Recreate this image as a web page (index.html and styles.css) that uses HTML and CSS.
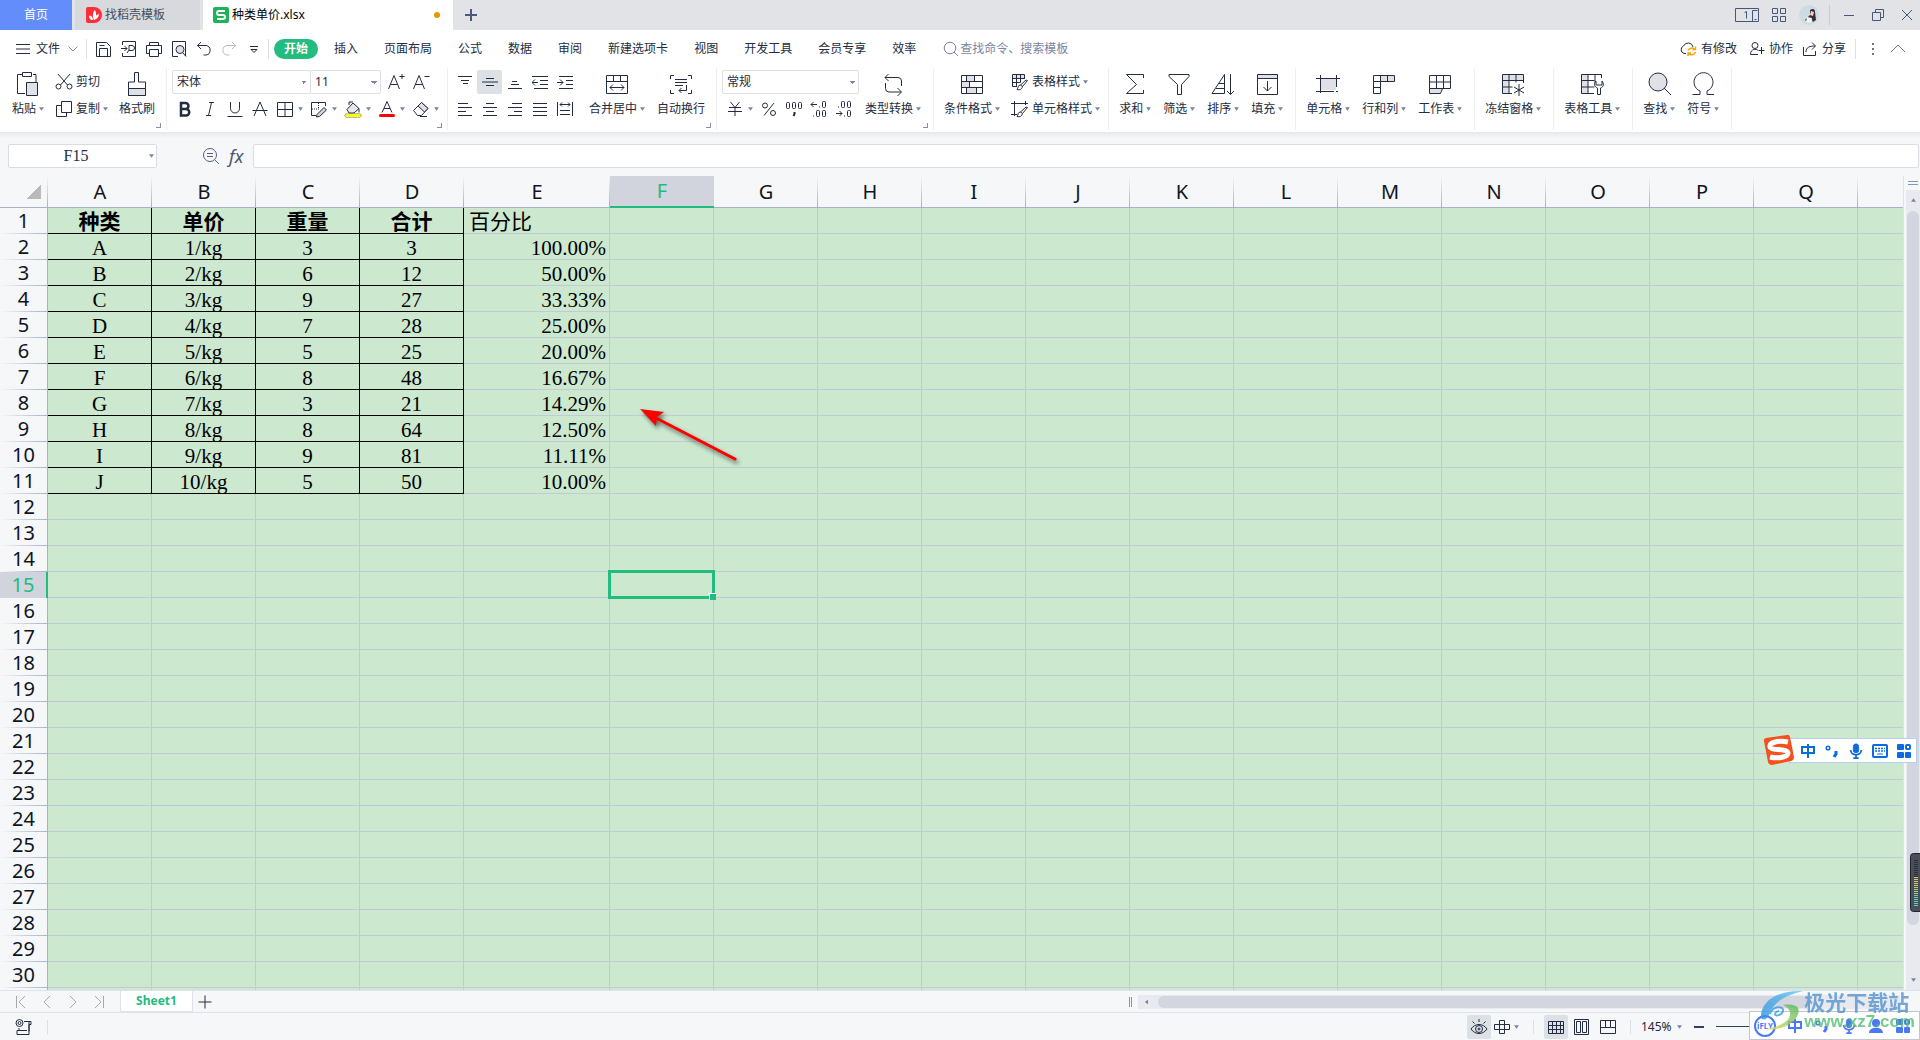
FILE: index.html
```html
<!DOCTYPE html>
<html lang="zh-CN">
<head>
<meta charset="utf-8">
<title>种类单价.xlsx</title>
<link rel="stylesheet" href="styles.css">
</head>
<body>
<svg class="sprite" aria-hidden="true">
  <symbol id="caret" viewBox="0 0 6 4"><path d="M0 0h6L3 4z" fill="#7885a3" stroke="none"/></symbol>
  <symbol id="chev" viewBox="0 0 10 6"><path d="M.5.5L5 5 9.500.5"/></symbol>
  <symbol id="menu" viewBox="0 0 16 16"><path d="M1 3.500h14M1 8h14M1 12.500h14"/></symbol>
  <symbol id="save" viewBox="0 0 16 16"><path d="M.5 1.500h10l4 4v10H.5zM3.500 15.500v-8h8v8M3.500 4.500h5"/></symbol>
  <symbol id="export" viewBox="0 0 16 16"><path d="M1.500 4V.5h13v15h-13V12M0 7.500h6M3.500 5L6 7.500 3.500 10M6 12l2-3V4.500h3a2 2 0 010 5H8"/></symbol>
  <symbol id="print" viewBox="0 0 16 16"><path d="M3.500 4.500v-3h9v3M3.500 12.500h-3v-8h15v8h-3M3.500 8.500h9v7h-9z"/></symbol>
  <symbol id="preview" viewBox="0 0 16 16"><path d="M7 15.500H1.500V.5h13V15M12 12l3 3.500"/><circle cx="9" cy="8.500" r="4" fill="#dfe1e6"/></symbol>
  <symbol id="undo" viewBox="0 0 16 16"><path d="M5 1L1.500 4.500 5 8M1.500 4.500H10a4.800 4.800 0 010 9.500H7.500"/></symbol>
  <symbol id="redo" viewBox="0 0 16 16"><path d="M11 1l3.500 3.500L11 8M14.500 4.500H6a4.800 4.800 0 000 9.500h2.500"/></symbol>
  <symbol id="search" viewBox="0 0 16 16"><circle cx="7" cy="7" r="5.800"/><path d="M11 11l4 4"/></symbol>
  <symbol id="cloud" viewBox="0 0 18 16"><path d="M7 12.500H5A4 4 0 014.500 5 5 5 0 0114 6"/><path d="M9 9.500a4 3.500 0 017-1M16.500 5.500v3h-3M16.500 11a4 3.500 0 01-7 1.500M9 15v-3h3" stroke="#f7a500" stroke-width="1.500"/></symbol>
  <symbol id="user" viewBox="0 0 16 16"><circle cx="6" cy="4.500" r="3"/><path d="M9 13.500H1.500c0-6 6-6 7.500-4M12.500 6v7M9.500 9.500h6"/></symbol>
  <symbol id="share" viewBox="0 0 16 16"><path d="M1.500 6v8.500h12V10M4 11c0-5 4-6 9-6M10 1.500L13.500 5 10 8.500"/></symbol>
  <symbol id="paste" viewBox="0 0 24 26"><path d="M9 22.500H1.500v-19h5M17 3.500h3V11M6.500 1.500h9v4h-9z"/><path d="M10.500 11.500h11v13h-11z" fill="#dfe1e6"/></symbol>
  <symbol id="cut" viewBox="0 0 18 18"><path d="M3 1l9.500 11M15 1L5.500 12"/><circle cx="3.500" cy="13.500" r="2.500"/><circle cx="14.500" cy="13.500" r="2.500"/></symbol>
  <symbol id="copy" viewBox="0 0 18 18"><path d="M6.500 1.500h10v11h-10zM6.500 5.500h-5v11h10v-4"/></symbol>
  <symbol id="painter" viewBox="0 0 24 26"><path d="M9.500 11V1.500h4V11h7v13.500h-17V11z"/><path d="M3.500 17.500h17v7h-17z" fill="#dfe1e6"/></symbol>
  <symbol id="bigger" viewBox="0 0 18 18"><path d="M1.500 16L7 2.500 12.500 16M3.500 11.500h7M15 1v5M12.500 3.500h5"/></symbol>
  <symbol id="smaller" viewBox="0 0 18 18"><path d="M1.500 16L7 2.500 12.500 16M3.500 11.500h7M12.500 3.500h5"/></symbol>
  <symbol id="bold" viewBox="0 0 18 18"><path d="M5 3h4.500a3 3 0 010 6H5zM5 9h5a3 3 0 010 6.500H5z" stroke-width="2.500"/></symbol>
  <symbol id="italic" viewBox="0 0 18 18"><path d="M8 2.500h5M5 15.500h5M10.500 2.500l-3 13"/></symbol>
  <symbol id="underline" viewBox="0 0 18 18"><path d="M4.500 2v6.500a4.500 4.500 0 009 0V2M1.500 16.500h15"/></symbol>
  <symbol id="strike" viewBox="0 0 18 18"><path d="M3 16L9 2l6 14M1.500 10.500h15"/></symbol>
  <symbol id="borders" viewBox="0 0 18 18"><path d="M1.500 2.500h15v14h-15zM9 2.500v14M1.500 9.500h15"/></symbol>
  <symbol id="drawborder" viewBox="0 0 18 18"><path d="M6 15.500H1.500v-13h14V6"/><path d="M2 9h7M8.500 3v6" stroke-dasharray="1 1"/><path d="M7 14.500l7-7 2.500 2.500-7 6.500-3 .5z" fill="#cfd2d9"/></symbol>
  <symbol id="fill" viewBox="0 0 18 18"><path d="M3 9.500L9 3l6 5.500-5 4.500H5zM5 5V2h4M15 8.500v4" fill="#e6e8ec"/><path d="M2.500 15.500h13" stroke="#77775a" stroke-width="4" stroke-linecap="round"/><path d="M2.500 15.500h13" stroke="#ff0" stroke-width="3" stroke-linecap="round"/></symbol>
  <symbol id="fontcolor" viewBox="0 0 18 18"><path d="M4 12.500L9 1.500l5 11M6 8.500h6"/><path d="M2.500 15.500h13" stroke="#f00" stroke-width="3" stroke-linecap="round"/></symbol>
  <symbol id="eraser" viewBox="0 0 18 18"><path d="M1.500 10.500l8-8 6.500 6-6.500 7h-4zM8 16.500h7"/><path d="M6 6l6.500 6 3.500-3.500-6.500-6z" fill="#dfe1e6"/></symbol>
  <symbol id="top" viewBox="0 0 16 16"><path d="M1 2.500h14M4 6.500h8M6 9.500h5"/></symbol>
  <symbol id="middle" viewBox="0 0 16 16"><path d="M4 4.500h8M0 8h16M4 11.500h8"/></symbol>
  <symbol id="bottom" viewBox="0 0 16 16"><path d="M5 7.500h5M4 10.500h8M1 14.500h14"/></symbol>
  <symbol id="outdent" viewBox="0 0 16 16"><path d="M0 2.500h16M8 6.500h8M8 10.500h8M2 14.500h14M0 8.500h6M3 5.500l-3 3 3 3"/></symbol>
  <symbol id="indent" viewBox="0 0 16 16"><path d="M2 2.500h14M9 6.500h7M9 10.500h7M2 14.500h14M0 8.500h6M3 5.500l3 3-3 3"/></symbol>
  <symbol id="left" viewBox="0 0 16 16"><path d="M1 2.500h10M1 6.500h14M1 10.500h8M1 14.500h14"/></symbol>
  <symbol id="center" viewBox="0 0 16 16"><path d="M4 2.500h8M1 6.500h14M4 10.500h8M1 14.500h14"/></symbol>
  <symbol id="right" viewBox="0 0 16 16"><path d="M5 2.500h10M1 6.500h14M7 10.500h8M1 14.500h14"/></symbol>
  <symbol id="justify" viewBox="0 0 16 16"><path d="M1 2.500h14M1 6.500h14M1 10.500h14M1 14.500h14"/></symbol>
  <symbol id="distribute" viewBox="0 0 16 16"><path d="M.5 1v14M15.500 1v14M3 3.500h10M5 1.500l-2 2 2 2M11 1.500l2 2-2 2M3 9.500h10M3 13.500h10"/></symbol>
  <symbol id="merge" viewBox="0 0 24 26"><path d="M1.500 4.500h21v18h-21zM1.500 10.500h21M8.500 4.500v6M15.500 4.500v6M5 16.500h14M8 13.500l-3 3 3 3M16 13.500l3 3-3 3"/></symbol>
  <symbol id="wrap" viewBox="0 0 24 26"><path d="M5 4.500H1.500V8M19 4.500h3.500V8M5 22.500H1.500V19M19 22.500h3.500V19M6 8.500h12M6 11.500h12M6 14.500h8M17.500 14v5.500H10M12.500 17L10 19.500l2.500 2.500"/></symbol>
  <symbol id="yen" viewBox="0 0 18 18"><path d="M4.500 2L9 7.500 13.500 2M3 7.500h12M2 11.500h14M9 7.500V16"/></symbol>
  <symbol id="percent" viewBox="0 0 18 18"><circle cx="5" cy="5.500" r="2.500"/><circle cx="13" cy="13" r="2.500"/><path d="M14 3L4 15.500"/></symbol>
  <symbol id="thousand" viewBox="0 0 18 18"><rect x="1.500" y="2.500" width="3" height="6" rx="1"/><rect x="7.500" y="2.500" width="3" height="6" rx="1"/><rect x="13.500" y="2.500" width="3" height="6" rx="1"/><path d="M9.500 12v2l-1 2" stroke-width="2"/></symbol>
  <symbol id="decplus" viewBox="0 0 18 18"><path d="M1 4.500h6M3.500 2L1 4.500 3.500 7M9.500 6.500v1M3.500 15.500v1"/><rect x="12.500" y="1.500" width="3" height="6" rx="1"/><rect x="6.500" y="10.500" width="3" height="6" rx="1"/><rect x="12.500" y="10.500" width="3" height="6" rx="1"/></symbol>
  <symbol id="decminus" viewBox="0 0 18 18"><path d="M1 13.500h6M4.500 11L7 13.500 4.500 16M9.500 15.500v1M3.500 6.500v1"/><rect x="12.500" y="10.500" width="3" height="6" rx="1"/><rect x="6.500" y="1.500" width="3" height="6" rx="1"/><rect x="12.500" y="1.500" width="3" height="6" rx="1"/></symbol>
  <symbol id="convert" viewBox="0 0 24 26"><path d="M7.500 3L4 6.500 7.500 10M4 6.500h13a3.500 3.500 0 013.500 3.500v5M16.500 17l4 4-4 4M20 21H8a3.500 3.500 0 01-3.500-3.500V12"/></symbol>
  <symbol id="cond" viewBox="0 0 24 26"><path d="M6 5h8v5H6zM2 11h7v5H2zM6 17h10v5H6z" fill="#dfe1e6" stroke="none"/><path d="M1.500 4.500h21v18h-21zM1.500 10.500h21M1.500 16.500h21M6.500 4.500v6M14.500 4.500v6M9.500 10.500v6M6.500 16.500v6M16.500 16.500v6"/></symbol>
  <symbol id="tstyle" viewBox="0 0 18 18"><path d="M2 2h12v4H2z" fill="#dfe1e6" stroke="none"/><path d="M6 13.500H1.500v-12h12V6M1.500 5.500h12M1.500 9.500h8M5.500 1.500v12M9.500 1.500v8M16.500 7.500l-5 6-2-1.500 5.500-5zM9.500 12c-3 0-2 3-3.500 4.500 3 1 5-.5 5.500-3"/></symbol>
  <symbol id="cstyle" viewBox="0 0 18 18"><path d="M0 3.500h17M3.500 1v15M0 14.500h6M14.500 1v4M16.500 7.500l-5 6-2-1.500 5.500-5zM9.500 12c-3 0-2 3-3.500 4.500 3 1 5-.5 5.500-3"/></symbol>
  <symbol id="sum" viewBox="0 0 24 26"><path d="M20.500 7V3.500h-17l10 10-10 9h17V19"/></symbol>
  <symbol id="filter" viewBox="0 0 24 26"><path d="M2 3.500h20v2l-7.500 8v10h-4v-10L2 5.500z"/></symbol>
  <symbol id="sort" viewBox="0 0 24 26"><path d="M1 22.500L13.500 3.500v19zM8 12.500h5M5 17.500h8M19.500 3v20M16 20l3.500 3.500L23 20"/></symbol>
  <symbol id="filldown" viewBox="0 0 24 26"><path d="M2.500 3.500h20v4h-20z" fill="#dfe1e6"/><path d="M2.500 7.500h20v16h-20zM12.500 10v10M8.500 16l4 4 4-4"/></symbol>
  <symbol id="cell" viewBox="0 0 24 26"><path d="M4 8h16v11H4z" fill="#dfe1e6" stroke="none"/><path d="M0 7.500h24M4.500 4v18M20.500 4v12M0 20.500h18M20 20.500h2"/></symbol>
  <symbol id="rowcol" viewBox="0 0 24 26"><path d="M9 5h13v6H9z" fill="#dfe1e6" stroke="none"/><path d="M1.500 4.500h21v6h-21zM1.500 10.500v12h7v-18M15.500 4.500v6M1.500 16.500h7"/></symbol>
  <symbol id="sheet" viewBox="0 0 24 26"><path d="M1.500 17.500h13l-2 5h-11z" fill="#dfe1e6"/><path d="M1.500 4.500h21v13h-21zM1.500 11h21M8.500 4.500v13M15.500 4.500v13"/></symbol>
  <symbol id="freeze" viewBox="0 0 24 26"><path d="M2 4h20v5H2zM2 4h6v18H2z" fill="#dfe1e6" stroke="none"/><path d="M11 22.500H1.500v-19h21V12M1.500 9.500h21M1.500 16h10M8 3.500v19M15 3.500v8M18 13v12M13 16l10 6M23 16l-10 6"/></symbol>
  <symbol id="tools" viewBox="0 0 24 26"><path d="M2 4h6v18H2z" fill="#dfe1e6" stroke="none"/><path d="M14 22.500H1.500v-19h20V7M1.500 9.500h13M1.500 16h13M8 3.500v19M15 3.500v8M16 10c-3 3-1 6 1.500 7v6.500h3V17c3-1 4-4 1.500-7v4h-6z"/></symbol>
  <symbol id="find" viewBox="0 0 24 26"><circle cx="11" cy="11" r="9" fill="#dfe1e6"/><path d="M17 17l7 7"/></symbol>
  <symbol id="omega" viewBox="0 0 24 26"><path d="M1.500 23.500H9V20a9.500 9.500 0 117 0v3.500h7"/></symbol>
  <symbol id="fxfind" viewBox="0 0 18 18"><circle cx="8" cy="8" r="6.500"/><path d="M13 13l4 4M5 6.500h6M5 9.500h6"/></symbol>
  <symbol id="first" viewBox="0 0 12 12"><path d="M1.500 0v12M10 0L4 6l6 6"/></symbol>
  <symbol id="prev" viewBox="0 0 12 12"><path d="M9 0L3 6l6 6"/></symbol>
  <symbol id="next" viewBox="0 0 12 12"><path d="M3 0l6 6-6 6"/></symbol>
  <symbol id="last" viewBox="0 0 12 12"><path d="M2 0l6 6-6 6M10.500 0v12"/></symbol>
  <symbol id="plus" viewBox="0 0 14 14"><path d="M7 .5v13M.5 7h13"/></symbol>
  <symbol id="macro" viewBox="0 0 18 18"><circle cx="4.500" cy="5" r="3.500"/><circle cx="4.500" cy="5" r="1.500"/><path d="M9 3.500h7v3h-2v10H2v-4h10M14 3.500v10M4 10v3"/></symbol>
  <symbol id="eye" viewBox="0 0 18 18"><path d="M1 11c4-6 12-6 16 0-4 6-12 6-16 0zM9 1v3M2.500 3.500l2 2M15.500 3.500l-2 2"/><circle cx="9" cy="11" r="3.500"/><circle cx="9" cy="11" r="1"/></symbol>
  <symbol id="cross" viewBox="0 0 18 18"><path d="M6.500 2.500h5v4h5v5h-5v4h-5v-4h-5v-5h5zM6.500 6.500h5v5h-5z"/></symbol>
  <symbol id="vgrid" viewBox="0 0 18 18"><path d="M1.500 3.500h15v12h-15zM1.500 7.500h15M1.500 11.500h15M5.500 3.500v12M9.500 3.500v12M13.500 3.500v12"/></symbol>
  <symbol id="vpage" viewBox="0 0 18 18"><path d="M1.500 1.500h14v15h-14zM3.500 3.500h4v11h-4zM9.500 3.500h4v11h-4z"/></symbol>
  <symbol id="vbreak" viewBox="0 0 18 18"><path d="M1.500 2.500h15v13h-15zM1.500 9.500h10v-7M6.500 2.500v7M11.500 9.500h5"/></symbol>
  <symbol id="mic" viewBox="0 0 16 18"><rect x="5" y="1" width="6" height="10" rx="3" fill="currentColor"/><path d="M2 8c0 7 12 7 12 0M8 13v4M5 17h6" stroke-width="2"/></symbol>
  <symbol id="apps" viewBox="0 0 16 16"><g fill="currentColor" stroke="none"><rect x="1" y="1" width="7" height="6" rx="1"/><rect x="1" y="9" width="7" height="6" rx="1"/><rect x="9" y="9" width="6" height="6" rx="1"/></g><rect x="10" y="2" width="4" height="4" rx="1" stroke-width="2"/></symbol>
  <symbol id="zhong" viewBox="0 0 16 16"><path d="M2 4h12v6H2zM8 1v14" stroke-width="2"/></symbol>
  <symbol id="punct" viewBox="0 0 16 16"><circle cx="4" cy="5" r="1.800" stroke-width="1.500"/><path d="M12 8v3l-2 3" stroke-width="3"/></symbol>
</svg>

<div class="app">
  <header class="titlebar">
    <button class="tab tab-home">首页</button>
    <button class="tab tab-docer">
      <svg class="i16" viewBox="0 0 16 16"><path d="M0 2a2 2 0 012-2h6a8 8 0 010 16H2a2 2 0 01-2-2z" fill="#fb2e3b" stroke="none"/><path d="M3 9c2-1 4 1 4 4-3 0-4-2-4-4zM8 13C6 9 7 5 9 3c2 4 1 7-1 10zM8 13c1-4 2-5 5-6 0 3-2 5-5 6z" fill="#fff" stroke="none"/></svg>
      找稻壳模板</button>
    <button class="tab tab-file">
      <svg class="i16" viewBox="0 0 16 16"><rect width="16" height="16" rx="2" fill="#1fb257" stroke="none"/><path d="M12 4H6a2 2 0 000 4h4a2 2 0 010 4H4" stroke="#fff" stroke-width="2"/></svg>
      <span>种类单价.xlsx</span><i class="unsaved"></i></button>
    <button class="newtab" aria-label="新建"><svg class="i14" viewBox="0 0 14 14"><path d="M7 1v12M1 7h12" stroke-width="2"/></svg></button>
    <div class="window-tools">
      <svg class="i24" viewBox="0 0 24 16"><path d="M.5 1.500h23v13H.5zM9.500 5.500l2-1v7M17.500 14.500v-11h5M19.500 12.500h2"/></svg>
      <svg class="i16" viewBox="0 0 16 16"><path d="M1.500 1.500h5v5h-5zM9.500 1.500h5v5h-5zM1.500 9.500h5v5h-5zM9.500 9.500h5v5h-5z"/></svg>
      <svg class="i20" viewBox="0 0 20 20"><circle cx="10" cy="10" r="10" fill="#cbdde2" stroke="none"/><path d="M11 5c3-2 5-1 5 2l1 8-3 2-2-4-4 4-2-2 5-5z" fill="#3a2c34" stroke="none"/><path d="M12 6l3 1-1 4-3-1z" fill="#f0d3c8" stroke="none"/><path d="M8 12l5 1-1 5-5-1z" fill="#eef3f5" stroke="none"/></svg>
      <i class="sep"></i>
      <button class="plain" aria-label="最小化"><svg class="i12" viewBox="0 0 12 12"><path d="M1 6.500h10"/></svg></button>
      <button class="plain" aria-label="还原"><svg class="i12" viewBox="0 0 12 12"><path d="M.5 3.500h8v8h-8zM3.500 3.500v-3h8v8h-3"/></svg></button>
      <button class="plain" aria-label="关闭"><svg class="i12" viewBox="0 0 12 12"><path d="M1 1l10 10M11 1L1 11"/></svg></button>
    </div>
  </header>

  <nav class="menubar">
    <button class="file"><svg class="i16"><use href="#menu"/></svg>文件<svg class="chev"><use href="#chev"/></svg></button>
    <i class="sep"></i>
    <div class="quick">
      <button class="plain" aria-label="保存"><svg class="i16"><use href="#save"/></svg></button>
      <button class="plain" aria-label="输出"><svg class="i16"><use href="#export"/></svg></button>
      <button class="plain" aria-label="打印"><svg class="i16"><use href="#print"/></svg></button>
      <button class="plain" aria-label="预览"><svg class="i16"><use href="#preview"/></svg></button>
      <button class="plain" aria-label="撤销"><svg class="i16"><use href="#undo"/></svg></button>
      <button class="plain dim" aria-label="恢复"><svg class="i16"><use href="#redo"/></svg></button>
      <button class="plain" aria-label="更多"><svg class="i16" viewBox="0 0 16 16"><path d="M4 5.500h8M5 8.500h6L8 11.500z"/></svg></button>
    </div>
    <i class="sep"></i>
    <button class="pill">开始</button>
    <div class="menus">
      <button>插入</button><button>页面布局</button><button>公式</button><button>数据</button><button>审阅</button><button>新建选项卡</button><button>视图</button><button>开发工具</button><button>会员专享</button><button>效率</button>
    </div>
    <label class="search"><svg class="i16"><use href="#search"/></svg><input type="text" placeholder="查找命令、搜索模板" aria-label="查找命令"></label>
    <div class="account">
      <button class="changes"><svg class="i18"><use href="#cloud"/></svg>有修改</button>
      <button><svg class="i16"><use href="#user"/></svg>协作</button>
      <button><svg class="i16"><use href="#share"/></svg>分享</button>
      <i class="sep"></i>
      <svg class="i16" viewBox="0 0 16 16"><path d="M8 2v2M8 7v2M8 12v2" stroke-width="2"/></svg>
      <svg class="i16" viewBox="0 0 16 16"><path d="M1 11l7-7 7 7"/></svg>
    </div>
  </nav>

  <div class="ribbon">
    <section class="group clip">
      <button class="big"><svg><use href="#paste"/></svg><span>粘贴<svg class="caret"><use href="#caret"/></svg></span></button>
      <div class="rows">
        <button class="small"><svg class="i18"><use href="#cut"/></svg>剪切</button>
        <button class="small"><svg class="i18"><use href="#copy"/></svg>复制<svg class="caret"><use href="#caret"/></svg></button>
      </div>
      <button class="big"><svg><use href="#painter"/></svg><span>格式刷</span></button>
      <i class="launch"></i>
    </section>
    <section class="group fonts">
      <div class="rows">
        <div class="row">
          <select class="box font" aria-label="字体"><option>宋体</option></select><select class="box size" aria-label="字号"><option>11</option></select>
          <button class="tool" aria-label="增大字号"><svg class="i18"><use href="#bigger"/></svg></button>
          <button class="tool" aria-label="减小字号"><svg class="i18"><use href="#smaller"/></svg></button>
        </div>
        <div class="row">
          <button class="tool" aria-label="加粗"><svg class="i18"><use href="#bold"/></svg></button>
          <button class="tool" aria-label="倾斜"><svg class="i18"><use href="#italic"/></svg></button>
          <button class="tool" aria-label="下划线"><svg class="i18"><use href="#underline"/></svg></button>
          <button class="tool" aria-label="删除线"><svg class="i18"><use href="#strike"/></svg></button>
          <button class="tool drop" aria-label="边框"><svg class="i18"><use href="#borders"/></svg><svg class="caret"><use href="#caret"/></svg></button>
          <button class="tool drop" aria-label="绘图边框"><svg class="i18"><use href="#drawborder"/></svg><svg class="caret"><use href="#caret"/></svg></button>
          <button class="tool drop" aria-label="填充颜色"><svg class="i18"><use href="#fill"/></svg><svg class="caret"><use href="#caret"/></svg></button>
          <button class="tool drop" aria-label="字体颜色"><svg class="i18"><use href="#fontcolor"/></svg><svg class="caret"><use href="#caret"/></svg></button>
          <button class="tool drop" aria-label="清除"><svg class="i18"><use href="#eraser"/></svg><svg class="caret"><use href="#caret"/></svg></button>
        </div>
      </div>
      <i class="launch"></i>
    </section>
    <section class="group align">
      <div class="rows">
        <div class="row">
          <button class="tool" aria-label="顶端对齐"><svg class="i16"><use href="#top"/></svg></button>
          <button class="tool on" aria-label="垂直居中"><svg class="i16"><use href="#middle"/></svg></button>
          <button class="tool" aria-label="底端对齐"><svg class="i16"><use href="#bottom"/></svg></button>
          <button class="tool" aria-label="减少缩进"><svg class="i16"><use href="#outdent"/></svg></button>
          <button class="tool" aria-label="增加缩进"><svg class="i16"><use href="#indent"/></svg></button>
        </div>
        <div class="row">
          <button class="tool" aria-label="左对齐"><svg class="i16"><use href="#left"/></svg></button>
          <button class="tool" aria-label="居中"><svg class="i16"><use href="#center"/></svg></button>
          <button class="tool" aria-label="右对齐"><svg class="i16"><use href="#right"/></svg></button>
          <button class="tool" aria-label="两端对齐"><svg class="i16"><use href="#justify"/></svg></button>
          <button class="tool" aria-label="分散对齐"><svg class="i16"><use href="#distribute"/></svg></button>
        </div>
      </div>
      <button class="big"><svg><use href="#merge"/></svg><span>合并居中<svg class="caret"><use href="#caret"/></svg></span></button>
      <button class="big"><svg><use href="#wrap"/></svg><span>自动换行</span></button>
      <i class="launch"></i>
    </section>
    <section class="group number">
      <div class="rows">
        <select class="box format" aria-label="数字格式"><option>常规</option></select>
        <div class="row">
          <button class="tool drop" aria-label="货币"><svg class="i18"><use href="#yen"/></svg><svg class="caret"><use href="#caret"/></svg></button>
          <button class="tool" aria-label="百分比"><svg class="i18"><use href="#percent"/></svg></button>
          <button class="tool" aria-label="千位分隔"><svg class="i18"><use href="#thousand"/></svg></button>
          <button class="tool" aria-label="增加小数位"><svg class="i18"><use href="#decplus"/></svg></button>
          <button class="tool" aria-label="减少小数位"><svg class="i18"><use href="#decminus"/></svg></button>
        </div>
      </div>
      <button class="big"><svg><use href="#convert"/></svg><span>类型转换<svg class="caret"><use href="#caret"/></svg></span></button>
      <i class="launch"></i>
    </section>
    <section class="group styles">
      <button class="big"><svg><use href="#cond"/></svg><span>条件格式<svg class="caret"><use href="#caret"/></svg></span></button>
      <div class="rows">
        <button class="small"><svg class="i18"><use href="#tstyle"/></svg>表格样式<svg class="caret"><use href="#caret"/></svg></button>
        <button class="small"><svg class="i18"><use href="#cstyle"/></svg>单元格样式<svg class="caret"><use href="#caret"/></svg></button>
      </div>
    </section>
    <section class="group">
      <button class="big"><svg><use href="#sum"/></svg><span>求和<svg class="caret"><use href="#caret"/></svg></span></button>
      <button class="big"><svg><use href="#filter"/></svg><span>筛选<svg class="caret"><use href="#caret"/></svg></span></button>
      <button class="big"><svg><use href="#sort"/></svg><span>排序<svg class="caret"><use href="#caret"/></svg></span></button>
      <button class="big"><svg><use href="#filldown"/></svg><span>填充<svg class="caret"><use href="#caret"/></svg></span></button>
    </section>
    <section class="group">
      <button class="big"><svg><use href="#cell"/></svg><span>单元格<svg class="caret"><use href="#caret"/></svg></span></button>
      <button class="big"><svg><use href="#rowcol"/></svg><span>行和列<svg class="caret"><use href="#caret"/></svg></span></button>
      <button class="big"><svg><use href="#sheet"/></svg><span>工作表<svg class="caret"><use href="#caret"/></svg></span></button>
    </section>
    <section class="group">
      <button class="big"><svg><use href="#freeze"/></svg><span>冻结窗格<svg class="caret"><use href="#caret"/></svg></span></button>
    </section>
    <section class="group">
      <button class="big"><svg><use href="#tools"/></svg><span>表格工具<svg class="caret"><use href="#caret"/></svg></span></button>
    </section>
    <section class="group">
      <button class="big"><svg><use href="#find"/></svg><span>查找<svg class="caret"><use href="#caret"/></svg></span></button>
      <button class="big"><svg><use href="#omega"/></svg><span>符号<svg class="caret"><use href="#caret"/></svg></span></button>
    </section>
  </div>

  <div class="formulabar">
    <div class="namebox"><input type="text" value="F15" aria-label="名称框"><svg class="caret"><use href="#caret"/></svg></div>
    <svg class="i18"><use href="#fxfind"/></svg>
    <span class="fx">fx</span>
    <input class="formula" type="text" aria-label="编辑栏">
  </div>

  <main class="workspace">
    <div class="sheet">
      <table class="grid" id="grid"></table>
      <svg class="pointer" viewBox="0 0 120 80"><path d="M103 65L24 24" stroke="#f00" stroke-width="3" stroke-linecap="round"/><path d="M8 15l24 3-7 5-1 9z" fill="#f00" stroke="none"/></svg>
    </div>
    <div class="vscroll">
      <i class="splitter"></i>
      <div class="vtrack">
        <svg class="caret up"><use href="#caret"/></svg>
        <i class="vthumb"></i>
        <svg class="caret"><use href="#caret"/></svg>
      </div>
    </div>
  </main>

  <div class="sheetbar">
    <div class="sheetnav">
      <button class="plain" aria-label="第一个"><svg class="i12"><use href="#first"/></svg></button>
      <button class="plain" aria-label="上一个"><svg class="i12"><use href="#prev"/></svg></button>
      <button class="plain" aria-label="下一个"><svg class="i12"><use href="#next"/></svg></button>
      <button class="plain" aria-label="最后一个"><svg class="i12"><use href="#last"/></svg></button>
    </div>
    <button class="sheettab">Sheet1</button>
    <button class="plain addsheet" aria-label="新建工作表"><svg class="i14"><use href="#plus"/></svg></button>
    <div class="hscroll"><i class="hgrip"></i><div class="htrack"><svg class="caret toleft"><use href="#caret"/></svg><i class="hthumb"></i></div></div>
  </div>

  <footer class="statusbar">
    <svg class="i18"><use href="#macro"/></svg>
    <i class="sep"></i>
    <div class="views">
      <button class="view on" aria-label="护眼模式"><svg class="i18"><use href="#eye"/></svg></button>
      <button class="reading" aria-label="阅读模式"><svg class="i18"><use href="#cross"/></svg><svg class="caret"><use href="#caret"/></svg></button>
      <i class="sep"></i>
      <button class="view on" aria-label="普通视图"><svg class="i18"><use href="#vgrid"/></svg></button>
      <button class="view" aria-label="页面布局"><svg class="i18"><use href="#vpage"/></svg></button>
      <button class="view" aria-label="分页预览"><svg class="i18"><use href="#vbreak"/></svg></button>
      <i class="sep"></i>
      <button class="zoom">145%<svg class="caret"><use href="#caret"/></svg></button>
      <i class="minus"></i><i class="track"></i>
    </div>
  </footer>

  <div class="ime">
    <svg class="i16"><use href="#zhong"/></svg>
    <svg class="i16"><use href="#punct"/></svg>
    <svg class="i16"><use href="#mic"/></svg>
    <svg class="i16" viewBox="0 0 16 16"><rect x="1" y="2" width="14" height="12" rx="1" stroke-width="2"/><path d="M3 5.500h10M3 8h10" stroke-dasharray="2 1" stroke-width="1.500"/><path d="M5 11h6"/></svg>
    <svg class="i16"><use href="#apps"/></svg>
    <svg class="sogou" viewBox="0 0 32 32"><path d="M2 7Q1 5 4 4L25 1q2-1 3 2l4 20q0 3-3 4L10 31q-3 0-4-3z" fill="#f4511e" stroke="none"/><path d="M26 8C15 6 7 9 8 13c1 4 17 1 18 6 0 4-10 6-18 4" stroke="#fff" stroke-width="5"/></svg>
  </div>

  <svg class="meter" viewBox="0 0 10 60"><rect x=".5" y=".5" width="14" height="58" rx="3" fill="#4a4d5c" stroke="#23252d"/><g stroke-width="4"><path d="M6 7v17" stroke="#2c2e38" stroke-dasharray="1 1"/><path d="M6 24v10" stroke="#dcc95b" stroke-dasharray="1 1"/><path d="M6 34v8" stroke="#a5d27b" stroke-dasharray="1 1"/><path d="M6 42v12" stroke="#5cd6ae" stroke-dasharray="1 1"/></g></svg>

  <div class="ifly">
    <svg class="i22" viewBox="0 0 22 22"><circle cx="11" cy="11" r="10" fill="#fff" stroke="#4a78f6" stroke-width="2"/></svg><b>iFLY</b>
    <svg class="i16"><use href="#zhong"/></svg>
    <svg class="i16"><use href="#punct"/></svg>
    <svg class="i16"><use href="#mic"/></svg>
    <svg class="i16" viewBox="0 0 16 16"><g fill="currentColor" stroke="none"><circle cx="8" cy="5" r="4"/><path d="M1 15c0-7 14-7 14 0z"/></g></svg>
    <svg class="i16"><use href="#apps"/></svg>
  </div>
  <div class="watermark">
    <svg class="swoosh" viewBox="0 0 46 42"><defs><linearGradient id="sky" x1="0" y1="1" x2="1" y2="0"><stop offset="0" stop-color="#2d8fdc"/><stop offset="1" stop-color="#63c6f3"/></linearGradient><linearGradient id="leaf" x1="1" y1="0" x2="0" y2="1"><stop offset="0" stop-color="#4db865"/><stop offset="1" stop-color="#e8e04a"/></linearGradient></defs><path d="M3 28C2 12 18 0 45 1 28 5 15 12 11 25c-2 4-5 6-8 3z" fill="url(#sky)" stroke="none"/><path d="M25 15c15-2 19 4 13 13-6 8-18 13-31 11 17-3 24-8 25-14 1-5-3-8-7-10z" fill="url(#leaf)" stroke="none"/><path d="M12 24c2-8 14-9 13-3-1 4-8 6-8 3 0-2 3-3 4-3" stroke="#3a9be0" stroke-width="2"/></svg>
    <div><strong>极光下载站</strong><span>www.xz7.com</span></div>
  </div>
</div>
<script src="grid.js"></script>
</body>
</html>
```
FILE: grid.js
```js
const columns = [..."ABCDEFGHIJKLMNOPQR"];
const lastRow = 31;
const active = { column: "F", row: 15 };
const data = [
  ["种类", "单价", "重量", "合计", "百分比"],
  ["A", "1/kg", "3", "3", "100.00%"],
  ["B", "2/kg", "6", "12", "50.00%"],
  ["C", "3/kg", "9", "27", "33.33%"],
  ["D", "4/kg", "7", "28", "25.00%"],
  ["E", "5/kg", "5", "25", "20.00%"],
  ["F", "6/kg", "8", "48", "16.67%"],
  ["G", "7/kg", "3", "21", "14.29%"],
  ["H", "8/kg", "8", "64", "12.50%"],
  ["I", "9/kg", "9", "81", "11.11%"],
  ["J", "10/kg", "5", "50", "10.00%"]
];

const colgroup = '<colgroup><col class="col-index">' +
  columns.map(c => `<col class="${c === "E" ? "col-wide" : "col"}">`).join("") + "</colgroup>";

const head = '<thead><tr><th class="corner"><i></i></th>' +
  columns.map(c => `<th scope="col"${c === active.column ? ' class="on"' : ""}>${c === "R" ? "" : c}</th>`).join("") +
  "</tr></thead>";

let body = "<tbody>";
for (let r = 1; r <= lastRow; r++) {
  body += `<tr><th scope="row"${r === active.row ? ' class="on"' : ""}>${r < lastRow ? r : ""}</th>`;
  columns.forEach((c, i) => {
    const value = data[r - 1]?.[i] ?? "";
    const names = [];
    if (value && i < 4) names.push("boxed");
    if (value && i < 4 && r === 1) names.push("title");
    if (value && i === 4) names.push(r === 1 ? "text" : "number-cell");
    const isActive = c === active.column && r === active.row;
    if (isActive) names.push("active");
    body += `<td${names.length ? ` class="${names.join(" ")}"` : ""}>${isActive ? '<i class="selection"></i>' : value}</td>`;
  });
  body += "</tr>";
}
body += "</tbody>";

document.getElementById("grid").innerHTML = colgroup + head + body;
```
FILE: styles.css
```css
* { box-sizing: border-box; }

body {
  margin: 0;
  font: 12px/18px "Noto Sans", "Noto Sans CJK SC", sans-serif;
  color: #232c40;
  background: #f5f7f9;
  overflow: hidden;
}

button, input, select {
  font: inherit;
  color: inherit;
  background: none;
  border: 0;
  padding: 0;
  margin: 0;
  white-space: nowrap;
}

svg { fill: none; stroke: currentColor; flex: none; display: block; }
.sprite { position: absolute; width: 0; height: 0; }
.i12 { width: 12px; height: 12px; }
.i14 { width: 14px; height: 14px; }
.i16 { width: 16px; height: 16px; }
.i18 { width: 18px; height: 18px; }
.i20 { width: 20px; height: 20px; }
.i22 { width: 22px; height: 22px; }
.i24 { width: 24px; height: 16px; }
.caret { width: 5px; height: 4px; }
.plain { display: flex; align-items: center; justify-content: center; }
.sep { width: 1px; height: 20px; background: #dcdfe5; flex: none; }

.app { position: relative; display: flex; flex-direction: column; height: 100vh; }

/* title bar */
.titlebar { display: flex; height: 30px; background: #e1e3e7; align-items: stretch; flex: none; }
.tab { display: flex; align-items: center; gap: 3px; margin-right: 3px; }
.tab-home { width: 72px; justify-content: center; background: #638dfb; color: #fff; }
.tab-docer { width: 125px; padding-left: 11px; background: #d8d9dc; color: #454d60; }
.tab-file { width: 250px; padding: 0 13px 0 10px; background: #fff; margin-right: 0; color: #000; }
.unsaved { width: 6px; height: 6px; border-radius: 3px; background: #e39a00; margin-left: auto; }
.newtab { width: 36px; display: flex; align-items: center; justify-content: center; color: #4b5a7c; }
.window-tools { display: flex; align-items: center; gap: 12px; margin-left: auto; padding-right: 6px; color: #46577c; }
.window-tools .plain { margin-left: 4px; margin-right: 1px; width: 12px; }
.window-tools .sep { background: #c8cbd2; margin-left: -2px; margin-right: -3px; }

/* menu bar */
.menubar { display: flex; align-items: center; height: 38px; background: #fff; flex: none; padding-left: 15px; }
.file { display: flex; align-items: center; gap: 5px; margin-right: 8px; }
.chev { width: 10px; height: 6px; margin-left: 3px; color: #8b93a3; }
.quick { display: flex; gap: 9px; padding: 0 6px 0 9px; }
.dim { color: #b9bcc3; }
.pill { height: 20px; padding: 0 10px; border-radius: 10px; margin: 0 3px 0 5px; background: #22bb80; color: #fff; font-weight: 700; }
.menus { display: flex; }
.menus button { padding: 0 13px; }
.search { display: flex; align-items: center; margin-left: 14px; color: #7985a3; flex: 1; }
.search input { width: 160px; padding-left: 1px; outline: 0; }
.search input::placeholder { color: #7985a3; opacity: 1; }
.account { display: flex; align-items: center; gap: 9px; padding-right: 14px; }
.account button { display: flex; align-items: center; gap: 4px; }
.account .changes { margin-right: 3px; }
.account > svg { color: #6b7280; }

/* ribbon */
.ribbon { display: flex; height: 64px; background: #fff; flex: none; }
.group { position: relative; display: flex; gap: 12px; padding: 2px 12px 0 10px; border-right: 1px solid #eceef1; height: 62px; flex: none; }
.rows { display: flex; flex-direction: column; gap: 3px; }
.row { display: flex; height: 24px; }
.big { display: flex; flex-direction: column; align-items: center; height: 50px; }
.big > svg { width: 24px; height: 26px; margin: 1px 0; }
.big span { display: flex; align-items: center; gap: 3px; height: 22px; }
.small { display: flex; align-items: center; gap: 3px; height: 24px; }
.tool { width: 25px; height: 24px; display: flex; align-items: center; justify-content: center; }
.drop { width: 34px; gap: 4px; }
.on { background: #dce1e6; border-radius: 2px; }
.launch { position: absolute; right: 5px; bottom: 2px; width: 5px; height: 5px; border: solid #8290ad; border-width: 0 1px 1px 0; }

.clip { gap: 11px; padding: 2px 11px 0 12px; }
.fonts { padding: 2px 5px 0 5px; }
.align { gap: 12px; padding: 2px 11px 0 4px; }
.number { gap: 6px; padding: 2px 12px 0 5px; }
.styles { gap: 11px; padding-right: 8px; }

.box {
  appearance: none;
  height: 24px;
  padding: 0 4px;
  border: 1px solid #dcdfe4;
  border-radius: 2px;
  background: #fff conic-gradient(from 315deg at 50% 100%, #7885a3 90deg, transparent 0) no-repeat right 3px center / 6px 3px;
}
.font { width: 139px; }
.size { width: 71px; margin-left: -1px; margin-right: 2px; }
.format { width: 137px; }

/* formula bar */
.formulabar {
  display: flex;
  align-items: center;
  height: 44px;
  padding: 4px 1px 0 8px;
  flex: none;
  background: linear-gradient(#e6e8ea, #f5f7f9 6px);
}
.namebox { display: flex; align-items: center; width: 149px; height: 24px; padding-right: 2px; margin-right: 45px; border: 1px solid #d9dce2; border-radius: 2px; background: #fff; }
.namebox input { width: 136px; flex: 1; padding-right: 6px; text-align: center; font: 16px/22px "Liberation Serif", serif; }
.formulabar > svg { color: #56617c; }
.fx { width: 33px; padding-left: 9px; font: italic 18px/20px "Noto Sans", sans-serif; color: #4c566e; }
.formula { flex: 1; height: 24px; border: 1px solid #d9dce2; border-radius: 2px; background: #fff; }

/* worksheet */
.workspace { display: flex; flex: 1; min-height: 0; }
.sheet { position: relative; flex: 1; min-width: 0; overflow: hidden; }
.grid { table-layout: fixed; width: 1962px; border-collapse: separate; border-spacing: 0; }
.col-index { width: 48px; }
.col { width: 104px; }
.col-wide { width: 146px; }
.grid th { padding: 0; font: 20px/24px "Noto Sans", sans-serif; color: #10141f; background: #f5f7f9; }
.grid thead th {
  height: 32px;
  border-bottom: 1px solid #a8b0ca;
  background: linear-gradient(#f5f7f9, #a8b0ca) no-repeat right / 1px 100%;
}
.grid tbody th {
  height: 26px;
  border-right: 1px solid #a8b0ca;
  background: linear-gradient(90deg, #f5f7f9, #a8b0ca) no-repeat bottom / 100% 1px;
}
.grid .on { color: #22bb80; background: #d1d4dc; border-radius: 0; }
.grid thead .on { border-bottom: 2px solid #22bb80; }
.grid tbody .on { border-right: 2px solid #22bb80; }
.corner i { display: block; width: 15px; height: 15px; margin: 0 7px 0 auto; background: linear-gradient(135deg, transparent 50%, #b9b9b9 50%); }
.grid td {
  height: 26px;
  padding: 4px 3px 0;
  overflow: hidden;
  white-space: nowrap;
  border-right: 1px solid #c3c9d7;
  border-bottom: 1px solid #c3c9d7;
  background: #cce8cf;
  color: #000;
  font: 21px/21px "Liberation Serif", "Noto Sans CJK SC", serif;
}
.grid .boxed { text-align: center; border-color: #000; }
.grid .title { font-weight: 700; }
.grid .number-cell { text-align: right; }
.grid .text { padding-left: 5px; }
.grid .active { position: relative; overflow: visible; }
.selection { position: absolute; inset: -2px; border: 3px solid #22bb80; z-index: 1; }
.selection::after { content: ""; position: absolute; right: -4px; bottom: -4px; width: 6px; height: 6px; background: #22bb80; border: solid #fff; border-width: 1px 0 0 1px; }
.pointer { position: absolute; left: 632px; top: 218px; width: 120px; height: 80px; filter: drop-shadow(2px 3px 2px rgba(0, 0, 0, .55)); }

.vscroll { width: 17px; display: flex; flex-direction: column; border-left: 1px solid #dfe2e8; }
.splitter { height: 4px; margin: 5px 2px 5px 4px; border: solid #8796b0; border-width: 1px 0; }
.vtrack { flex: 1; margin-left: 2px; display: flex; flex-direction: column; align-items: center; padding: 8px 0; background: #e9eaf0; }
.vthumb { width: 12px; flex: 1; margin: 9px 0 53px; border-radius: 6px; background: #d3d6df; }
.up { transform: rotate(180deg); }

/* sheet tabs */
.sheetbar { display: flex; align-items: center; height: 22px; flex: none; border-top: 1px solid #dfe2e8; }
.sheetnav { display: flex; gap: 14px; padding-left: 15px; width: 120px; color: #a4a7ae; }
.sheettab { width: 73px; height: 21px; background: #fff; border: 1px solid #dfe2e8; border-top: 0; color: #22bb80; font-weight: 700; }
.addsheet { margin-left: 5px; }
.hscroll { display: flex; align-items: center; gap: 6px; margin-left: auto; width: 791px; padding-right: 20px; }
.hgrip { width: 3px; height: 10px; border: solid #8796b0; border-width: 0 1px; }
.htrack { display: flex; align-items: center; flex: 1; height: 14px; padding: 0 90px 0 6px; background: #e9eaf0; }
.hthumb { flex: 1; height: 12px; margin-left: 9px; border-radius: 6px; background: #d3d6df; }
.toleft { transform: rotate(90deg); }

/* status bar */
.statusbar { display: flex; align-items: center; height: 28px; flex: none; padding-left: 15px; border-top: 1px solid #dfe2e8; }
.statusbar .sep { height: 14px; }
.statusbar > .sep { margin-left: 14px; }
.views { display: flex; align-items: center; margin-left: auto; width: 453px; }
.view { width: 24px; height: 24px; display: flex; align-items: center; justify-content: center; margin-right: 2px; }
.reading { display: flex; align-items: center; gap: 3px; margin-right: 14px; }
.views .sep + .view { margin-left: 10px; }
.zoom { display: flex; align-items: center; gap: 5px; margin-left: 10px; }
.views .sep { margin-left: 0; }
.view:nth-of-type(5) { margin: 0 10px 0 0; }
.minus { width: 10px; height: 2px; margin: 0 12px; background: #33405c; }
.track { width: 50px; height: 1px; background: #33405c; }

/* floating input bars */
.ime { position: absolute; right: 3px; bottom: 277px; display: flex; align-items: center; gap: 8px; width: 128px; height: 25px; padding-left: 10px; background: #fff; border: 1px solid #b6cff0; color: #0a6bdc; }
.sogou { position: absolute; left: -28px; top: -5px; width: 32px; height: 32px; }
.meter { position: absolute; right: 0; bottom: 127px; width: 10px; height: 60px; }
.ifly { position: absolute; right: 0; bottom: 0; display: flex; align-items: center; gap: 11px; width: 171px; height: 29px; padding-left: 4px; background: #fff; border: 1px solid #c3c6cc; color: #4a78f6; }
.ifly b { position: absolute; left: 4px; width: 22px; text-align: center; font-size: 8px; }
.watermark { position: absolute; right: 5px; bottom: 8px; display: flex; opacity: .8; }
.swoosh { width: 46px; height: 42px; }
.watermark div { display: flex; flex-direction: column; }
.watermark strong { font: 700 21px/22px "Noto Sans CJK SC", sans-serif; color: #5593cf; }
.watermark span { font: 700 17px/20px "Liberation Sans", sans-serif; color: #52bd74; }
```
